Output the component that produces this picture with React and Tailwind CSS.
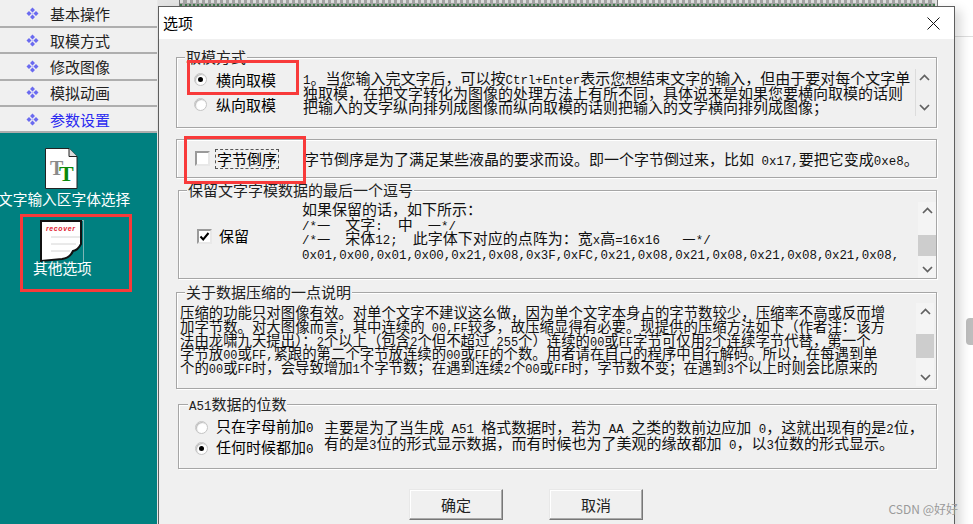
import React from 'react';

const cjk = { fontFamily: '"Noto Sans CJK SC", "Noto Sans", sans-serif' };

// latin runs of the original use a narrow bitmap-like mono font
const Mixed = ({ text }) => (
    <>
        {text.split(/([\x20-\x7e]+)/).map((part, i) =>
            /^[\x20-\x7e]+$/.test(part) ? (
                <span key={i} className="font-['Liberation_Mono',monospace] text-[0.83em]">{part}</span>
            ) : (
                <span key={i}>{part}</span>
            )
        )}
    </>
);

const Lines = ({ lines, className }) => (
    <div className={`whitespace-pre text-[#111] ${className}`}>
        {lines.map((line) => (
            <div key={line}><Mixed text={line} /></div>
        ))}
    </div>
);

const Group = ({ legend, legendClass, className, children }) => (
    <div className={`relative border border-[#a6a6a6] shadow-[inset_1px_1px_0_#fff,1px_1px_0_#fff] ${className}`}>
        {legend && (
            <div className={`absolute -top-[9px] bg-[#f0f0f0] px-px h-[16px] leading-[16px] whitespace-pre text-[#222] ${legendClass}`}>
                <Mixed text={legend} />
            </div>
        )}
        {children}
    </div>
);

const Radio = ({ checked }) => (
    <span className="flex w-[13px] h-[13px] shrink-0 items-center justify-center rounded-full bg-white border border-[#c4c4c4] shadow-[inset_1px_1px_1px_#bbb]">
        {checked && <span className="w-[5px] h-[5px] rounded-full bg-black" />}
    </span>
);

const Checkbox = ({ checked }) => (
    <span className="flex w-[15px] h-[15px] shrink-0 items-center justify-center bg-white border-2 border-t-[#9a9a9a] border-l-[#9a9a9a] border-r-[#e8e8e8] border-b-[#e8e8e8]">
        {checked && (
            <svg width="11" height="11" viewBox="0 0 11 11">
                <path d="M1.5 5.5 L4.2 8.5 L9.5 2" fill="none" stroke="#000" strokeWidth="2" />
            </svg>
        )}
    </span>
);

const Chevron = ({ up }) => (
    <svg width="11" height="7" viewBox="0 0 11 7">
        <path d={up ? 'M1 6 L5.5 1.5 L10 6' : 'M1 1 L5.5 5.5 L10 1'} fill="none" stroke="#606060" strokeWidth="1.7" />
    </svg>
);

const Scrollbar = ({ gapTop, thumb, className }) => (
    <div className={`flex flex-col items-center w-[18px] bg-[#f4f4f4] ${className}`}>
        <div className="h-[17px] flex items-center justify-center"><Chevron up /></div>
        {thumb ? (
            <>
                <div style={{ height: gapTop }} />
                <div className="w-full bg-[#cdcdcd]" style={{ height: thumb }} />
                <div className="flex-1" />
            </>
        ) : (
            <div className="flex-1" />
        )}
        <div className="h-[17px] flex items-center justify-center"><Chevron /></div>
    </div>
);

const MenuDiamond = () => (
    <svg width="13" height="13" viewBox="0 0 13 13" className="shrink-0">
        <path d="M6.5 0.5 L9 3 L6.5 5.5 L4 3 Z M6.5 7.5 L9 10 L6.5 12.5 L4 10 Z M0.5 6.5 L3 4 L5.5 6.5 L3 9 Z M7.5 6.5 L10 4 L12.5 6.5 L10 9 Z" fill="#6a6af0" />
        <circle cx="6.5" cy="6.5" r="1.2" fill="#c4c4fa" />
    </svg>
);

const FontFileIcon = () => (
    <svg width="33" height="41" viewBox="0 0 33 41">
        <path d="M0.5 0.5 H24 L32 8.5 V40.5 H0.5 Z" fill="#fff" stroke="#222" />
        <path d="M24 0.5 V8.5 H32" fill="#ddd" stroke="#222" />
        <text x="5" y="27" fontFamily="Liberation Serif" fontWeight="700" fontSize="20" fill="#8a8a8a">T</text>
        <text x="14" y="33" fontFamily="Liberation Serif" fontWeight="700" fontSize="22" fill="#0a8a0a">T</text>
    </svg>
);

const RecoverIcon = () => (
    <svg width="44" height="44" viewBox="0 0 44 44">
        <rect x="0.5" y="0.5" width="43" height="43" fill="none" stroke="#7fb5b5" />
        <path d="M1 1 H41 V24 Q38 30 33 31 Q30 38 22 39 L1 41 Z" fill="#fff" stroke="#111" strokeWidth="2" />
        <text x="6" y="11" fontFamily="Liberation Sans" fontWeight="700" fontStyle="italic" fontSize="7" letterSpacing="0.6" fill="#e02030">recover</text>
        <path d="M11 17 H40 M11 24 H36 M11 31 H30" stroke="#d4d4d4" />
    </svg>
);

const menu = ['基本操作', '取模方式', '修改图像', '模拟动画', '参数设置'];

const Sidebar = () => (
    <div className="relative flex flex-col w-[158px] shrink-0 h-full bg-[#008080] border-r border-[#e8e8e8]" style={cjk}>
        <div className="flex flex-col">
            {menu.map((item, i) => (
                <div
                    key={item}
                    className={`flex items-center gap-[11px] pl-[26px] bg-[#f0f0f0] border-b-2 border-b-[#aeaeae] ${i === 0 ? 'h-[28px]' : 'h-[26.3px]'}`}
                >
                    <MenuDiamond />
                    <span className={`text-[15px] leading-none ${i === 4 ? 'text-[#2a2af0]' : 'text-[#222]'}`}>{item}</span>
                </div>
            ))}
        </div>
        <div className="flex flex-col pt-[15px] text-white text-[14.7px] overflow-hidden">
            <div className="ml-[45px]"><FontFileIcon /></div>
            <div className="-ml-[2px] whitespace-nowrap leading-[20px]">文字输入区字体选择</div>
            <div className="mt-[11px] ml-[40px]"><RecoverIcon /></div>
            <div className="ml-[33px] -mt-[5px] leading-[18px] whitespace-nowrap">其他选项</div>
        </div>
        {/* red note box drawn over the screenshot */}
        <div className="absolute left-[20px] top-[214px] w-[112px] h-[78px] border-[3px] border-[#f83a3a]" />
    </div>
);

const Dialog = () => (
    <div className="relative flex flex-col w-[797px] h-[530px] shrink-0 bg-[#f0f0f0] border border-[#5e5e5e] shadow-[6px_4px_10px_rgba(0,0,0,0.15)]" style={cjk}>
        <div className="flex items-center justify-between h-[32px] shrink-0 bg-white pl-[4px] pr-[14px]">
            <span className="text-[15px] text-black">选项</span>
            <svg width="13" height="13" viewBox="0 0 13 13">
                <path d="M0.5 0.5 L12.5 12.5 M12.5 0.5 L0.5 12.5" stroke="#111" strokeWidth="1" />
            </svg>
        </div>

        <div className="flex flex-col pl-[17px] pr-[17px] text-[15px]">
            <Group legend="取模方式" legendClass="left-[8px] text-[15px]" className="mt-[18px] h-[71px] flex">
                <div className="flex flex-col w-[126px] shrink-0 pl-[17px] pt-[14px] gap-[10px]">
                    <label className="flex items-center gap-[9px] leading-[15px]"><Radio checked />横向取模</label>
                    <label className="flex items-center gap-[9px] leading-[15px]"><Radio />纵向取模</label>
                </div>
                <Lines
                    className="flex-1 pt-[13px] leading-[14.6px] [&>div]:h-[14.6px]"
                    lines={[
                        '1。当您输入完文字后，可以按Ctrl+Enter表示您想结束文字的输入，但由于要对每个文字单',
                        '独取模，在把文字转化为图像的处理方法上有所不同，具体说来是如果您要横向取模的话则',
                        '把输入的文字纵向排列成图像而纵向取模的话则把输入的文字横向排列成图像；',
                    ]}
                />
                <Scrollbar className="h-[47px] mt-[11px] mr-[3px] border-l border-[#dcdcdc] !bg-transparent" />
            </Group>

            <Group className="mt-[11px] h-[39px] flex items-center">
                <div className="ml-[18px] mr-[4px]"><Checkbox /></div>
                <span className="border border-dashed border-[#555] h-[20px] leading-[17px] px-px ml-[1px]">字节倒序</span>
                <Lines className="ml-[25px] leading-[15px] [&>div]:h-[15px]" lines={['字节倒序是为了满足某些液晶的要求而设。即一个字节倒过来，比如 0x17,要把它变成0xe8。']} />
            </Group>

            <Group legend="保留文字字模数据的最后一个逗号" legendClass="left-[8px] text-[15px]" className="mt-[12px] ml-[2px] h-[89px] flex">
                <div className="flex items-center w-[123px] shrink-0 pl-[18px] gap-[7px] pt-[3px] self-stretch">
                    <Checkbox checked />
                    <span>保留</span>
                </div>
                <Lines
                    className="flex-1 pt-[11px] leading-[14.6px] [&>div]:h-[14.6px]"
                    lines={[
                        '如果保留的话，如下所示：',
                        '/*—  文字:  中  —*/',
                        '/*—  宋体12;  此字体下对应的点阵为：宽x高=16x16   —*/',
                        '0x01,0x00,0x01,0x00,0x21,0x08,0x3F,0xFC,0x21,0x08,0x21,0x08,0x21,0x08,0x21,0x08,',
                    ]}
                />
                <Scrollbar gapTop="16px" thumb="21px" className="h-[76px] mt-[11px] shrink-0" />
            </Group>

            <Group legend="关于数据压缩的一点说明" legendClass="left-[8px] text-[15px]" className="mt-[13px] h-[97px] flex">
                <Lines
                    className="flex-1 pl-[3px] pt-[12px] text-[14.4px] leading-[13.8px] [&>div]:h-[13.8px]"
                    lines={[
                        '压缩的功能只对图像有效。对单个文字不建议这么做，因为单个文字本身占的字节数较少，压缩率不高或反而增',
                        '加字节数。对大图像而言，其中连续的 00,FF较多，故压缩显得有必要。现提供的压缩方法如下（作者注：该方',
                        '法由龙啸九天提出）：2个以上（包含2个但不超过 255个）连续的00或FF字节可仅用2个连续字节代替，第一个',
                        '字节放00或FF,紧跟的第二个字节放连续的00或FF的个数。用者请在自己的程序中自行解码。所以，在每遇到单',
                        '个的00或FF时，会导致增加1个字节数；在遇到连续2个00或FF时，字节数不变；在遇到3个以上时则会比原来的',
                    ]}
                />
                <Scrollbar gapTop="14px" thumb="24px" className="h-[83px] mt-[10px] mr-[2px] shrink-0" />
            </Group>

            <Group legend="A51数据的位数" legendClass="left-[9px] text-[15px]" className="mt-[15px] ml-[2px] h-[65px] flex">
                <div className="flex flex-col w-[145px] shrink-0 pl-[16px] pt-[14px] gap-[5px]">
                    <label className="flex items-center gap-[8px] h-[16px] leading-[16px] whitespace-nowrap"><Radio /><span><Mixed text="只在字母前加0" /></span></label>
                    <label className="flex items-center gap-[8px] h-[16px] leading-[16px] whitespace-nowrap"><Radio checked /><span><Mixed text="任何时候都加0" /></span></label>
                </div>
                <Lines
                    className="flex-1 pt-[14px] leading-[15.5px] [&>div]:h-[15.5px]"
                    lines={[
                        '主要是为了当生成 A51 格式数据时，若为 AA 之类的数前边应加 0，这就出现有的是2位，',
                        '有的是3位的形式显示数据，而有时候也为了美观的缘故都加 0，以3位数的形式显示。',
                    ]}
                />
            </Group>

            <div className="flex gap-[46px] mt-[20px] pl-[233px]">
                {['确定', '取消'].map((label) => (
                    <button
                        key={label}
                        className="w-[94px] h-[31px] bg-[#f0f0f0] text-[15px] leading-none text-[#222] border border-t-[#e8e8e8] border-l-[#e8e8e8] border-r-[#777] border-b-[#777] shadow-[inset_-1px_-1px_0_#aaa,inset_1px_1px_0_#fff]"
                    >
                        {label}
                    </button>
                ))}
            </div>
        </div>

        {/* red note boxes drawn over the screenshot */}
        <div className="absolute left-[28px] top-[53px] w-[112px] h-[35px] border-[3px] border-[#f83a3a]" />
        <div className="absolute left-[25px] top-[129px] w-[122px] h-[48px] border-[3px] border-[#f83a3a]" />
    </div>
);

export default function App() {
    return (
        <div className="relative flex w-[973px] h-[524px] overflow-hidden bg-white">
            <Sidebar />
            <div className="flex flex-col flex-1 min-w-0">
                <div className="flex h-[6px] shrink-0">
                    <div className="w-[22px] bg-[#e4e4e4] border-r border-[#777]" />
                    <div className="w-[755px] bg-[#a4a4a4] border-t-[3px] border-t-[#dcdcdc] border-b-2 border-dotted border-b-[#3f7a4c]" />
                    <div className="w-[3px] bg-[#e4e4e4] border-r border-[#777]" />
                </div>
                <div className="flex">
                    <Dialog />
                    <div className="flex-1 pt-[30px]">
                        <div className="border-t border-[#dedede] pl-[11px] pt-[281px]">
                            <div className="w-[8px] h-[27px] rounded-l-[4px] bg-[#bdbdbd]" />
                        </div>
                    </div>
                </div>
            </div>
            <div className="absolute right-[15px] bottom-[9px] text-[12px] leading-none text-[#9a9a9a] whitespace-nowrap" style={cjk}>CSDN @好好</div>
        </div>
    );
}
